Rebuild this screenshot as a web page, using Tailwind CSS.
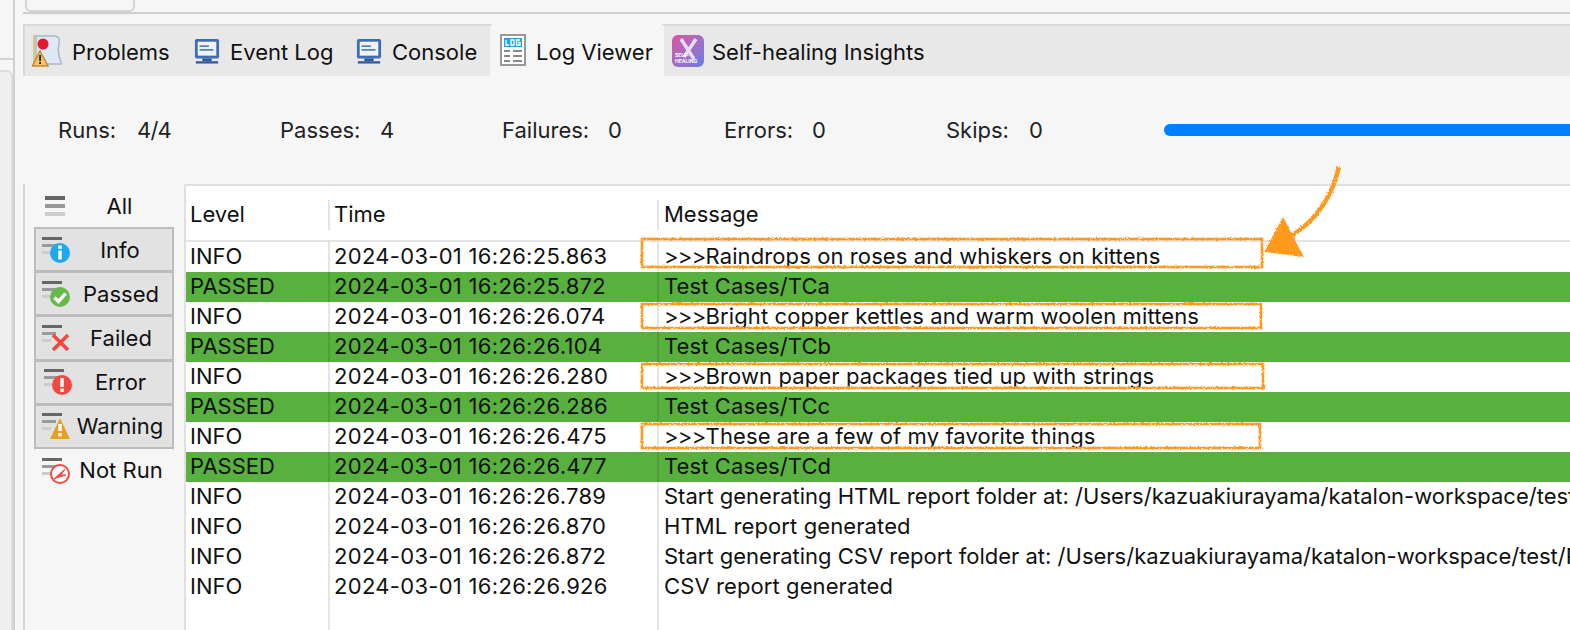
<!DOCTYPE html>
<html><head><meta charset="utf-8"><script src="https://cdn.jsdelivr.net/npm/@tailwindcss/browser@4"></script></head>
<body class="m-0 bg-[#f6f6f6]">
<div class="relative w-[1570px] h-[630px] overflow-hidden bg-[#f6f6f6] font-['Inter','Liberation_Sans',sans-serif] text-[22px] text-[#111] flex">
  <!-- left gutter -->
  <div class="w-[23px] shrink-0 flex">
    <div class="w-[13px] flex flex-col">
      <div class="h-[60px] border-b-2 border-[#d4d4d4]"></div>
      <div class="h-[10px]"></div>
      <div class="flex-1 bg-[#efefef] border-t-2 border-r-2 border-[#dcdcdc] rounded-tr-md"></div>
    </div>
    <div class="w-[10px] border-l-2 border-[#d0d0d0]"></div>
  </div>
  <div class="flex-1 flex flex-col min-w-0">
    <!-- top strip -->
    <div class="h-[24px] shrink-0 flex flex-col">
      <div class="h-[14px] border-b-2 border-[#cfcfcf] pl-[2px]">
        <div class="w-[110px] h-[12px] border-x-2 border-b-2 border-[#d4d4d4] rounded-b-md"></div>
      </div>
      <div class="h-[10px]"></div>
    </div>
    <!-- tabs -->
    <div class="h-[52px] shrink-0 bg-[#e8e8e8] border-t-2 border-l-2 border-[#d8d8d8] flex items-center relative">
      <div class="flex items-center h-full pl-[7px] w-[169px] gap-[10px] shrink-0">
        <svg class="w-[30px] h-[34px] shrink-0" viewBox="0 0 30 34"><path d="M1 2H22C27 2 28 5 27 10C25 18 27 24 30 30H4V2Z" fill="#dfe8f5" stroke="#a9b7c9" stroke-width="1.5"/><path d="M1 2H4V28H1Z" fill="#d1c79a"/><circle cx="11" cy="10" r="5.5" fill="#e3192f"/><path d="M8 17L16 32H0.5Z" fill="#f4c36e" stroke="#c98a2c" stroke-width="1.5"/><rect x="7.2" y="21" width="1.8" height="6" fill="#222"/><rect x="7.2" y="28" width="1.8" height="2" fill="#222"/></svg>
        <span class="pt-[3px]">Problems</span>
      </div>
      <div class="flex items-center h-full w-[162px] gap-[10px] shrink-0">
        <svg class="w-[26px] h-[26px] shrink-0" viewBox="0 0 28 28"><rect x="1" y="1" width="26" height="21" rx="2" fill="#3f6db1"/><rect x="4" y="4" width="20" height="15" fill="#eef3fa"/><rect x="6" y="8" width="10" height="1.6" fill="#3f6db1"/><rect x="6" y="12" width="15" height="1.6" fill="#3f6db1"/><rect x="9" y="22" width="10" height="3" fill="#2f5a9e"/><rect x="2" y="25" width="24" height="2.5" fill="#2f5a9e"/></svg>
        <span class="pt-[3px]">Event Log</span>
      </div>
      <div class="flex items-center h-full w-[134px] gap-[10px] shrink-0">
        <svg class="w-[26px] h-[26px] shrink-0" viewBox="0 0 28 28"><rect x="1" y="1" width="26" height="21" rx="2" fill="#3f6db1"/><rect x="4" y="4" width="20" height="15" fill="#eef3fa"/><rect x="6" y="8" width="10" height="1.6" fill="#3f6db1"/><rect x="6" y="12" width="15" height="1.6" fill="#3f6db1"/><rect x="9" y="22" width="10" height="3" fill="#2f5a9e"/><rect x="2" y="25" width="24" height="2.5" fill="#2f5a9e"/></svg>
        <span class="pt-[3px]">Console</span>
      </div>
      <div class="flex items-center h-[52px] -mt-[2px] w-[174px] pl-[10px] gap-[10px] bg-[#f6f6f6] rounded-t shrink-0">
        <svg class="w-[26px] h-[32px] shrink-0" viewBox="0 0 26 32"><rect x="1" y="1" width="24" height="30" fill="#fff" stroke="#999" stroke-width="2"/><rect x="4" y="4" width="18" height="9" fill="#21a4ec"/><path d="M6 6V11H9M11 6H14V11H11ZM20 6H16.5V11H20V8.5H18" fill="none" stroke="#fff" stroke-width="1.3"/><path d="M4 17H10M13 17H22M4 22H10M13 22H22M4 27H10M13 27H22" stroke="#888" stroke-width="2"/></svg>
        <span class="pt-[5px]">Log Viewer</span>
      </div>
      <div class="flex items-center h-full pl-[8px] gap-[8px] shrink-0">
        <div class="relative w-[32px] h-[32px] rounded-md overflow-hidden bg-gradient-to-br from-[#d94f9e] to-[#5f7ce8] shrink-0">
          <svg class="absolute inset-0 w-full h-full" viewBox="0 0 32 32"><path d="M9 4L22 24M24 4L12 22" stroke="#e9dcf5" stroke-width="3.5"/></svg>
          <span class="absolute left-[3px] top-[17px] text-[5px] leading-[6px] font-bold text-white">SELF-<br>HEALING</span>
        </div>
        <span class="pt-[3px]">Self-healing Insights</span>
      </div>
    </div>
    <!-- stats -->
    <div class="h-[108px] shrink-0 flex items-start pt-[38px] pl-[35px] text-[#222]">
      <div class="w-[222px] flex shrink-0"><span class="w-[79px]">Runs:</span><span class="tracking-[-0.8px]">4/4</span></div>
      <div class="w-[222px] flex shrink-0"><span class="w-[100px]">Passes:</span><span>4</span></div>
      <div class="w-[222px] flex shrink-0"><span class="w-[106px]">Failures:</span><span>0</span></div>
      <div class="w-[222px] flex shrink-0"><span class="w-[88px]">Errors:</span><span>0</span></div>
      <div class="w-[218px] flex shrink-0"><span class="w-[83px]">Skips:</span><span>0</span></div>
      <div class="flex-1 h-[12px] mt-[10px] bg-[#0080ff] rounded-l-full"></div>
    </div>
    <!-- body -->
    <div class="flex-1 flex min-h-0 border-l-2 border-[#d8d8d8]">
      <!-- filters -->
      <div class="w-[159px] shrink-0 pl-[9px] pr-[10px] flex flex-col">
        <div class="h-[44px] flex items-center pl-[11px]">
          <svg class="w-[20px] h-[20px] shrink-0" viewBox="0 0 20 20"><rect y="0" width="20" height="4" fill="#666"/><rect y="8" width="20" height="4" fill="#999"/><rect y="16" width="20" height="4" fill="#ccc"/></svg>
          <span class="flex-1 text-center">All</span>
        </div>
        <div class="border-2 border-[#bcbcbc] bg-[#bcbcbc] flex flex-col gap-[3px] h-[222px] -mt-[1px]">
          <div class="flex-1 bg-[#e2e2e2] flex items-center pl-[6px]">
            <svg class="w-[28px] h-[28px] shrink-0" viewBox="0 0 28 28"><rect y="1" width="20" height="3" fill="#666"/><rect y="8" width="14" height="3" fill="#999"/><rect y="15" width="9" height="3" fill="#ccc"/><circle cx="18" cy="17" r="10" fill="#1fa7f0"/><rect x="16.3" y="9.5" width="3.4" height="3.4" fill="#fff"/><rect x="16.3" y="14.5" width="3.4" height="9" fill="#fff"/></svg>
            <span class="flex-1 text-center pr-[2px] pt-[2px]">Info</span>
          </div>
          <div class="flex-1 bg-[#e2e2e2] flex items-center pl-[6px]">
            <svg class="w-[28px] h-[28px] shrink-0" viewBox="0 0 28 28"><rect y="1" width="20" height="3" fill="#666"/><rect y="8" width="14" height="3" fill="#999"/><rect y="15" width="9" height="3" fill="#ccc"/><circle cx="18" cy="17" r="10" fill="#66ba4a"/><path d="M12.5 17.5L16.5 21.5L23.5 13.5" fill="none" stroke="#fff" stroke-width="3.4"/></svg>
            <span class="flex-1 text-center pt-[2px]">Passed</span>
          </div>
          <div class="flex-1 bg-[#e2e2e2] flex items-center pl-[6px]">
            <svg class="w-[28px] h-[28px] shrink-0" viewBox="0 0 28 28"><rect y="1" width="20" height="3" fill="#666"/><rect y="8" width="14" height="3" fill="#999"/><rect y="15" width="9" height="3" fill="#ccc"/><path d="M11 11L26 26M26 11L11 26" stroke="#f4473f" stroke-width="3.6"/></svg>
            <span class="flex-1 text-center">Failed</span>
          </div>
          <div class="flex-1 bg-[#e2e2e2] flex items-center pl-[8px]">
            <svg class="w-[28px] h-[28px] shrink-0" viewBox="0 0 28 28"><rect y="1" width="20" height="3" fill="#666"/><rect y="8" width="14" height="3" fill="#999"/><rect y="15" width="9" height="3" fill="#ccc"/><circle cx="18" cy="17" r="10" fill="#f4473f"/><rect x="16.3" y="10" width="3.4" height="9" fill="#fff"/><rect x="16.3" y="20.5" width="3.4" height="3.4" fill="#fff"/></svg>
            <span class="flex-1 text-center pr-[3px]">Error</span>
          </div>
          <div class="flex-1 bg-[#e2e2e2] flex items-center pl-[6px]">
            <svg class="w-[28px] h-[28px] shrink-0" viewBox="0 0 28 28"><rect y="1" width="20" height="3" fill="#666"/><rect y="8" width="14" height="3" fill="#999"/><rect y="15" width="9" height="3" fill="#ccc"/><path d="M18 6L28 27H8Z" fill="#e5a124"/><rect x="16.3" y="12" width="3.4" height="7" fill="#fff"/><rect x="16.3" y="21" width="3.4" height="3.4" fill="#fff"/></svg>
            <span class="flex-1 text-center pr-[2px]">Warning</span>
          </div>
        </div>
        <div class="h-[44px] flex items-center pl-[8px]">
          <svg class="w-[28px] h-[28px] shrink-0" viewBox="0 0 28 28"><rect y="1" width="20" height="3" fill="#666"/><rect y="8" width="14" height="3" fill="#999"/><rect y="15" width="9" height="3" fill="#ccc"/><circle cx="18" cy="17" r="9" fill="#fff" stroke="#f4473f" stroke-width="2"/><path d="M12 22L23 12L19 18L24 18L14 21Z" fill="#f4473f" stroke="#f4473f"/></svg>
          <span class="flex-1 text-center pr-[2px] pb-[2px]">Not Run</span>
        </div>
      </div>
      <!-- table -->
      <div class="flex-1 min-w-0 bg-white border-t-2 border-l-2 border-[#e0e0e0] relative overflow-hidden">
        <div class="absolute left-[142px] top-[56px] bottom-0 w-[2px] bg-black/10"></div>
        <div class="absolute left-[471px] top-[56px] bottom-0 w-[2px] bg-black/10"></div>
        <div class="h-[56px] grid grid-cols-[144px_329px_1fr] items-center border-b-2 border-[#e4e4e4] pt-[3px]">
          <div class="pl-[4px] h-[30px] flex items-center border-r-2 border-[#e4e4e4]">Level</div>
          <div class="pl-[4px] h-[30px] flex items-center border-r-2 border-[#e4e4e4]">Time</div>
          <div class="pl-[5px]">Message</div>
        </div>
        <div class="grid grid-cols-[144px_329px_1fr] whitespace-nowrap leading-[28px] h-[30px] overflow-hidden"><div class="pl-[4px]">INFO</div><div class="pl-[4px] tracking-[0.3px]">2024-03-01 16:26:25.863</div><div class="pl-[5px] tracking-[0.1px]"><span class="tracking-[-0.7px]">&gt;&gt;&gt;</span>Raindrops on roses and whiskers on kittens</div></div>
        <div class="grid grid-cols-[144px_329px_1fr] whitespace-nowrap leading-[28px] h-[30px] overflow-hidden bg-[#58b03f]"><div class="pl-[4px]">PASSED</div><div class="pl-[4px] tracking-[0.3px]">2024-03-01 16:26:25.872</div><div class="pl-[5px] tracking-[0.1px]">Test Cases/TCa</div></div>
        <div class="grid grid-cols-[144px_329px_1fr] whitespace-nowrap leading-[28px] h-[30px] overflow-hidden"><div class="pl-[4px]">INFO</div><div class="pl-[4px] tracking-[0.3px]">2024-03-01 16:26:26.074</div><div class="pl-[5px] tracking-[0.1px]"><span class="tracking-[-0.7px]">&gt;&gt;&gt;</span>Bright copper kettles and warm woolen mittens</div></div>
        <div class="grid grid-cols-[144px_329px_1fr] whitespace-nowrap leading-[28px] h-[30px] overflow-hidden bg-[#58b03f]"><div class="pl-[4px]">PASSED</div><div class="pl-[4px] tracking-[0.3px]">2024-03-01 16:26:26.104</div><div class="pl-[5px] tracking-[0.1px]">Test Cases/TCb</div></div>
        <div class="grid grid-cols-[144px_329px_1fr] whitespace-nowrap leading-[28px] h-[30px] overflow-hidden"><div class="pl-[4px]">INFO</div><div class="pl-[4px] tracking-[0.3px]">2024-03-01 16:26:26.280</div><div class="pl-[5px] tracking-[0.1px]"><span class="tracking-[-0.7px]">&gt;&gt;&gt;</span>Brown paper packages tied up with strings</div></div>
        <div class="grid grid-cols-[144px_329px_1fr] whitespace-nowrap leading-[28px] h-[30px] overflow-hidden bg-[#58b03f]"><div class="pl-[4px]">PASSED</div><div class="pl-[4px] tracking-[0.3px]">2024-03-01 16:26:26.286</div><div class="pl-[5px] tracking-[0.1px]">Test Cases/TCc</div></div>
        <div class="grid grid-cols-[144px_329px_1fr] whitespace-nowrap leading-[28px] h-[30px] overflow-hidden"><div class="pl-[4px]">INFO</div><div class="pl-[4px] tracking-[0.3px]">2024-03-01 16:26:26.475</div><div class="pl-[5px] tracking-[0.1px]"><span class="tracking-[-0.7px]">&gt;&gt;&gt;</span>These are a few of my favorite things</div></div>
        <div class="grid grid-cols-[144px_329px_1fr] whitespace-nowrap leading-[28px] h-[30px] overflow-hidden bg-[#58b03f]"><div class="pl-[4px]">PASSED</div><div class="pl-[4px] tracking-[0.3px]">2024-03-01 16:26:26.477</div><div class="pl-[5px] tracking-[0.1px]">Test Cases/TCd</div></div>
        <div class="grid grid-cols-[144px_329px_1fr] whitespace-nowrap leading-[28px] h-[30px] overflow-hidden"><div class="pl-[4px]">INFO</div><div class="pl-[4px] tracking-[0.3px]">2024-03-01 16:26:26.789</div><div class="pl-[5px]">Start generating HTML report folder at: /Users/kazuakiurayama/katalon-workspace/test/</div></div>
        <div class="grid grid-cols-[144px_329px_1fr] whitespace-nowrap leading-[28px] h-[30px] overflow-hidden"><div class="pl-[4px]">INFO</div><div class="pl-[4px] tracking-[0.3px]">2024-03-01 16:26:26.870</div><div class="pl-[5px] tracking-[0.1px]">HTML report generated</div></div>
        <div class="grid grid-cols-[144px_329px_1fr] whitespace-nowrap leading-[28px] h-[30px] overflow-hidden"><div class="pl-[4px]">INFO</div><div class="pl-[4px] tracking-[0.3px]">2024-03-01 16:26:26.872</div><div class="pl-[5px]">Start generating CSV report folder at: /Users/kazuakiurayama/katalon-workspace/test/R</div></div>
        <div class="grid grid-cols-[144px_329px_1fr] whitespace-nowrap leading-[28px] h-[30px] overflow-hidden"><div class="pl-[4px]">INFO</div><div class="pl-[4px] tracking-[0.3px]">2024-03-01 16:26:26.926</div><div class="pl-[5px] tracking-[0.1px]">CSV report generated</div></div>
      </div>
    </div>
  </div>
  <!-- hand-drawn annotation overlay -->
  <svg class="absolute left-0 top-0 w-[1570px] h-[630px] pointer-events-none" viewBox="0 0 1570 630">
    <defs><filter id="rough" x="-5%" y="-20%" width="110%" height="140%"><feTurbulence type="fractalNoise" baseFrequency="0.5" numOctaves="2" seed="3"/><feDisplacementMap in="SourceGraphic" scale="3"/></filter></defs>
    <g filter="url(#rough)" fill="none" stroke="#ff9a1f" stroke-width="2.6">
      <rect x="642" y="239" width="620" height="28"/>
      <rect x="642" y="304" width="619" height="24"/>
      <rect x="642" y="364" width="621" height="24"/>
      <rect x="642" y="424" width="618" height="24"/>
      <path d="M1339 167C1332 195 1322 208 1310 221C1303 228 1296 233 1288 238" stroke-width="4.5"/>
      <path d="M1283 219L1266 251L1302 256Z" fill="#ff9a1f" stroke-width="2"/>
    </g>
  </svg>
</div>
</body></html>
